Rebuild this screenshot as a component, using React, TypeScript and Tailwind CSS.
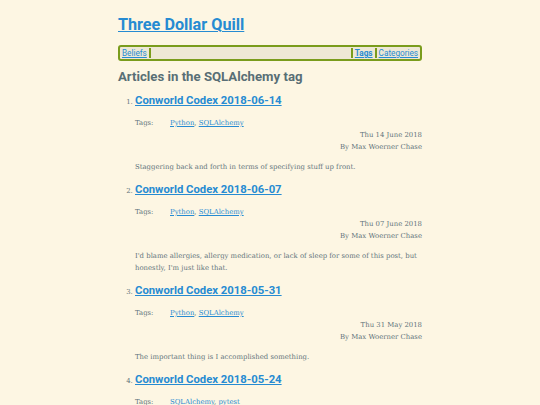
import React from 'react';

interface Article {
  title: string;
  tags: string[];
  date: string;
  summary: string;
}

const articles: Article[] = [
  {
    title: 'Conworld Codex 2018-06-14',
    tags: ['Python', 'SQLAlchemy'],
    date: 'Thu 14 June 2018',
    summary: 'Staggering back and forth in terms of specifying stuff up front.',
  },
  {
    title: 'Conworld Codex 2018-06-07',
    tags: ['Python', 'SQLAlchemy'],
    date: 'Thu 07 June 2018',
    summary:
      "I'd blame allergies, allergy medication, or lack of sleep for some of this post, but honestly, I'm just like that.",
  },
  {
    title: 'Conworld Codex 2018-05-31',
    tags: ['Python', 'SQLAlchemy'],
    date: 'Thu 31 May 2018',
    summary: 'The important thing is I accomplished something.',
  },
  {
    title: 'Conworld Codex 2018-05-24',
    tags: ['SQLAlchemy', 'pytest'],
    date: 'Thu 24 May 2018',
    summary: 'Some progress on the tests.',
  },
];

const heading = "font-['Roboto','Noto_Sans',sans-serif]";
const body = "font-['DejaVu_Serif','Liberation_Serif',serif]";

const ArticleItem: React.FC<{ article: Article }> = ({ article }) => (
  <li className={`${body} text-[6.9px] leading-[12px] text-[#5f747b] mb-[9px]`}>
    <h3 className={`${heading} text-[11.3px] leading-[16px] font-bold`}>
      <a href="#" className="text-[#268bd2] underline">
        {article.title}
      </a>
    </h3>
    <div className="mt-[8px] flex">
      <span className="w-[35px]">Tags:</span>
      <span>
        {article.tags.map((t, i) => (
          <React.Fragment key={t}>
            {i > 0 && ', '}
            <a href="#" className="text-[#268bd2] underline">
              {t}
            </a>
          </React.Fragment>
        ))}
      </span>
    </div>
    <div className="text-right">{article.date}</div>
    <div className="text-right">By Max Woerner Chase</div>
    <p className="mt-[8px]">{article.summary}</p>
  </li>
);

const App: React.FC = () => {
  return (
    <div className="min-h-screen bg-[#fdf6e3]">
      <div className="w-[304px] mx-auto pt-[14px]">
        <h1 className={`${heading} text-[16.2px] leading-[22px] font-bold`}>
          <a href="#" className="text-[#268bd2] underline">
            Three Dollar Quill
          </a>
        </h1>

        {/* Nav */}
        <nav
          className={`${heading} mt-[9px] flex items-center h-[16px] rounded-[3px] border-2 border-[#7a9c1c] bg-[#eee8d5] text-[8.2px] leading-[10px]`}
        >
          <a href="#" className="pl-[2px] pr-[2px] border-r-2 border-[#7a9c1c] text-[#268bd2] underline">
            Beliefs
          </a>
          <div className="flex-1" />
          <a href="#" className="px-[2px] border-l-2 border-[#7a9c1c] font-bold text-[#268bd2] underline">
            Tags
          </a>
          <a href="#" className="pl-[2px] pr-[2px] border-l-2 border-[#7a9c1c] text-[#268bd2] underline">
            Categories
          </a>
        </nav>

        <h2 className={`${heading} mt-[8px] text-[13.2px] leading-[16px] font-bold text-[#586e75]`}>
          Articles in the SQLAlchemy tag
        </h2>

        <ol className="list-decimal pl-[17px] mt-[8px]">
          {articles.map((a) => (
            <ArticleItem key={a.title} article={a} />
          ))}
        </ol>
      </div>
    </div>
  );
};

export default App;
